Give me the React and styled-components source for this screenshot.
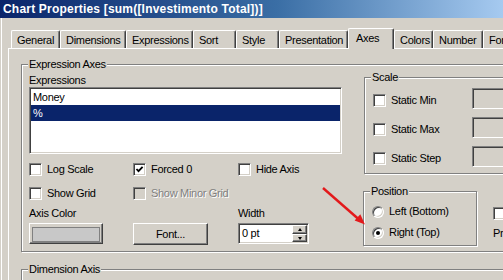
import React from "react";
import styled, { createGlobalStyle } from "styled-components";

const GlobalStyle = createGlobalStyle`
  html, body {
    margin: 0;
    padding: 0;
    background: #d4d0c8;
  }
  body {
    font-family: "Liberation Sans", Arial, sans-serif;
    font-size: 11px;
    letter-spacing: -0.3px;
    color: #000;
  }
`;

const tabs = [
  ["General", 49],
  ["Dimensions", 66],
  ["Expressions", 67],
  ["Sort", 43],
  ["Style", 43],
  ["Presentation", 69],
  ["Axes", 46, true],
  ["Colors", 39],
  ["Number", 50],
  ["Fonts", 60],
];

const App = () => {
  return (
    <>
      <GlobalStyle />
      <Window>
        <TitleBar>Chart Properties [sum([Investimento Total])]</TitleBar>
        <Body>
          <TabStrip>
            {tabs.map(([name, w, active]) => (
              <Tab key={name} $w={w} $active={active}>
                {name}
              </Tab>
            ))}
          </TabStrip>
          <Panel>
            <ExprGroup>
              <Legend>Expression Axes</Legend>
              <Columns>
                <LeftCol>
                  <FieldLabel>Expressions</FieldLabel>
                  <ListBox>
                    <ListItem>Money</ListItem>
                    <ListItem $selected>%</ListItem>
                  </ListBox>
                  <CheckGrid>
                    <Check label="Log Scale" />
                    <Check label="Forced 0" checked />
                    <Check label="Hide Axis" />
                    <Check label="Show Grid" />
                    <Check label="Show Minor Grid" disabled />
                  </CheckGrid>
                  <ControlGrid>
                    <FieldLabel>Axis Color</FieldLabel>
                    <span />
                    <FieldLabel>Width</FieldLabel>
                    <Button $w={74}>
                      <Swatch />
                    </Button>
                    <Button $w={75} $h={22}>Font...</Button>
                    <SpinBox>
                      <SpinText>0 pt</SpinText>
                      <SpinButtons>
                        <SpinButton $h={9}>
                          <Arrow $up />
                        </SpinButton>
                        <SpinButton $h={8}>
                          <Arrow />
                        </SpinButton>
                      </SpinButtons>
                    </SpinBox>
                  </ControlGrid>
                </LeftCol>
                <RightCol>
                  <ScaleGroup>
                    <Legend>Scale</Legend>
                    <ScaleRows>
                      {["Static Min", "Static Max", "Static Step"].map((t) => (
                        <ScaleRow key={t}>
                          <ScaleCheck>
                            <Check label={t} />
                          </ScaleCheck>
                          <EditBox />
                        </ScaleRow>
                      ))}
                    </ScaleRows>
                  </ScaleGroup>
                  <PositionRow>
                    <PositionGroup>
                      <Legend>Position</Legend>
                      <RadioList>
                        <Radio label="Left (Bottom)" />
                        <Radio label="Right (Top)" checked />
                      </RadioList>
                    </PositionGroup>
                    <PrCol>
                      <Box />
                      <PrText>Pr</PrText>
                    </PrCol>
                  </PositionRow>
                </RightCol>
              </Columns>
            </ExprGroup>
            <DimGroup>
              <Legend>Dimension Axis</Legend>
            </DimGroup>
          </Panel>
        </Body>
        <Overlay width="503" height="280" viewBox="0 0 503 280">
          <line x1="323" y1="188" x2="359" y2="219.5" stroke="#e3191b" strokeWidth="2.4" />
          <polygon points="365,224.5 354.6,220.6 360.3,214.2" fill="#e3191b" />
        </Overlay>
      </Window>
    </>
  );
};

const Check = ({ label, checked, disabled }) => (
  <CheckLabel $disabled={disabled}>
    <Box $disabled={disabled}>
      {checked && (
        <svg width="9" height="9" viewBox="0 0 9 9">
          <polyline points="1.5,4 3.5,6.2 7.6,1.8" fill="none" stroke="#000" strokeWidth="1.8" />
        </svg>
      )}
    </Box>
    <span>{label}</span>
  </CheckLabel>
);

const Radio = ({ label, checked }) => (
  <CheckLabel>
    <RadioDot>{checked && <Dot />}</RadioDot>
    <span>{label}</span>
  </CheckLabel>
);

const Window = styled.div`
  position: relative;
  width: 503px;
  height: 280px;
  overflow: hidden;
  display: flex;
  flex-direction: column;
  background: #d4d0c8;
`;

const TitleBar = styled.div`
  height: 18px;
  line-height: 18px;
  padding-left: 3px;
  flex-shrink: 0;
  background: linear-gradient(to right, #0a246a 0%, #3a6ea5 55%, #a6caf0 100%);
  color: #fff;
  font-weight: bold;
  font-size: 12px;
  letter-spacing: 0.2px;
  white-space: nowrap;
`;

const Body = styled.div`
  flex: 1;
  display: flex;
  flex-direction: column;
  margin-left: 1px;
  border-left: 1px solid #fff;
  padding-top: 10px;
`;

const TabStrip = styled.div`
  display: flex;
  align-items: flex-end;
  height: 20px;
  padding-left: 9px;
  flex-shrink: 0;
`;

const Tab = styled.div`
  position: relative;
  flex-shrink: 0;
  box-sizing: border-box;
  width: ${(p) => p.$w}px;
  height: ${(p) => (p.$active ? 21 : 18)}px;
  margin-bottom: ${(p) => (p.$active ? -1 : 0)}px;
  z-index: ${(p) => (p.$active ? 1 : 0)};
  padding: 2px 0 0 ${(p) => (p.$active ? 7 : 5)}px;
  line-height: 14px;
  white-space: nowrap;
  overflow: hidden;
  background: #d4d0c8;
  border-top: 1px solid #fff;
  border-left: 1px solid #fff;
  border-right: 1px solid #404040;
  border-radius: 2px 2px 0 0;
  box-shadow: inset -1px 0 0 #808080;
`;

const Panel = styled.div`
  flex: 1;
  margin-left: 6px;
  border-top: 1px solid #fff;
  border-left: 1px solid #fff;
  padding: 15px 0 0 12px;
`;

const Group = styled.div`
  position: relative;
  box-sizing: border-box;
  border: 1px solid #808080;
  box-shadow: inset 1px 1px 0 #fff, 1px 1px 0 #fff;
`;

const Legend = styled.span`
  position: absolute;
  top: -7px;
  left: 6px;
  padding: 0 1px;
  line-height: 13px;
  background: #d4d0c8;
  white-space: nowrap;
`;

const ExprGroup = styled(Group)`
  width: 620px;
  height: 188px;
  padding: 9px 0 0 7px;
`;

const DimGroup = styled(Group)`
  width: 620px;
  height: 60px;
  margin-top: 17px;
`;

const Columns = styled.div`
  display: flex;
`;

const LeftCol = styled.div`
  width: 313px;
  display: flex;
  flex-direction: column;
`;

const FieldLabel = styled.div`
  line-height: 13px;
  white-space: nowrap;
`;

const Sunken = styled.div`
  box-sizing: border-box;
  border: 1px solid;
  border-color: #808080 #fff #fff #808080;
  box-shadow: inset 1px 1px 0 #404040, inset -1px -1px 0 #d4d0c8;
`;

const ListBox = styled(Sunken)`
  height: 67px;
  padding: 1px;
  background: #fff;
`;

const ListItem = styled.div`
  height: 16px;
  line-height: 16px;
  padding-left: 2px;
  background: ${(p) => (p.$selected ? "#0a246a" : "transparent")};
  color: ${(p) => (p.$selected ? "#fff" : "#000")};
`;

const CheckGrid = styled.div`
  display: grid;
  grid-template-columns: 104px 105px auto;
  row-gap: 11px;
  margin-top: 9px;
`;

const CheckLabel = styled.label`
  display: flex;
  align-items: center;
  gap: 5px;
  height: 13px;
  line-height: 13px;
  white-space: nowrap;
  color: ${(p) => (p.$disabled ? "#808080" : "#000")};
  text-shadow: ${(p) => (p.$disabled ? "1px 1px 0 #fff" : "none")};
`;

const Box = styled.span`
  flex-shrink: 0;
  box-sizing: border-box;
  width: 13px;
  height: 13px;
  display: flex;
  align-items: center;
  justify-content: center;
  background: ${(p) => (p.$disabled ? "#d4d0c8" : "#fff")};
  border: 1px solid;
  border-color: #808080 #fff #fff #808080;
  box-shadow: inset 1px 1px 0 #404040, inset -1px -1px 0 #d4d0c8;
`;

const RadioDot = styled.span`
  flex-shrink: 0;
  box-sizing: border-box;
  width: 12px;
  height: 12px;
  border-radius: 50%;
  display: flex;
  align-items: center;
  justify-content: center;
  background: #fff;
  border: 1px solid;
  border-color: #808080 #fff #fff #808080;
  box-shadow: inset 1px 1px 0 #404040, inset -1px -1px 0 #d4d0c8;
`;

const Dot = styled.span`
  width: 4px;
  height: 4px;
  border-radius: 50%;
  background: #000;
`;

const ControlGrid = styled.div`
  display: grid;
  grid-template-columns: 104px 105px auto;
  row-gap: 3px;
  margin-top: 7px;
  align-items: start;
`;

const Button = styled.div`
  box-sizing: border-box;
  width: ${(p) => p.$w}px;
  height: ${(p) => p.$h || 21}px;
  display: flex;
  align-items: center;
  justify-content: center;
  background: #d4d0c8;
  border: 1px solid;
  border-color: #fff #404040 #404040 #fff;
  box-shadow: inset -1px -1px 0 #808080;
`;

const Swatch = styled.span`
  box-sizing: border-box;
  width: 68px;
  height: 15px;
  margin: 1px 1px 0 0;
  background: #c8c8c8;
  border: 1px solid #808080;
`;

const SpinBox = styled(Sunken)`
  width: 71px;
  height: 21px;
  padding: 2px;
  display: flex;
  background: #fff;
`;

const SpinText = styled.div`
  flex: 1;
  line-height: 15px;
  padding-left: 1px;
`;

const SpinButtons = styled.div`
  width: 15px;
  display: flex;
  flex-direction: column;
  margin: -1px -1px -1px 0;
`;

const SpinButton = styled.div`
  box-sizing: border-box;
  height: ${(p) => p.$h}px;
  display: flex;
  align-items: center;
  justify-content: center;
  background: #d4d0c8;
  border: 1px solid;
  border-color: #fff #404040 #404040 #fff;
  box-shadow: inset -1px -1px 0 #808080;
`;

const Arrow = styled.span`
  width: 0;
  height: 0;
  border-left: 2.5px solid transparent;
  border-right: 2.5px solid transparent;
  ${(p) => (p.$up ? "border-bottom: 3px solid #000;" : "border-top: 3px solid #000;")}
`;

const RightCol = styled.div`
  margin-left: 21px;
  display: flex;
  flex-direction: column;
`;

const ScaleGroup = styled(Group)`
  width: 220px;
  height: 97px;
  margin: 3px 0 0 1px;
  padding: 10px 0 0 8px;
`;

const ScaleRows = styled.div`
  display: flex;
  flex-direction: column;
  gap: 8px;
`;

const ScaleRow = styled.div`
  display: flex;
  align-items: center;
  height: 21px;
`;

const ScaleCheck = styled.div`
  width: 99px;
  margin-top: 3px;
`;

const EditBox = styled(Sunken)`
  width: 80px;
  height: 21px;
  background: #d4d0c8;
`;

const PositionRow = styled.div`
  display: flex;
  margin-top: 17px;
`;

const PositionGroup = styled(Group)`
  flex-shrink: 0;
  width: 114px;
  height: 55px;
  padding: 13px 0 0 8px;
`;

const RadioList = styled.div`
  display: flex;
  flex-direction: column;
  gap: 8px;
`;

const PrCol = styled.div`
  margin-left: 16px;
  padding-top: 16px;
  display: flex;
  flex-direction: column;
`;

const PrText = styled.div`
  margin-top: 7px;
  line-height: 13px;
`;

const Overlay = styled.svg`
  position: absolute;
  left: 0;
  top: 0;
  pointer-events: none;
`;

export default App;
